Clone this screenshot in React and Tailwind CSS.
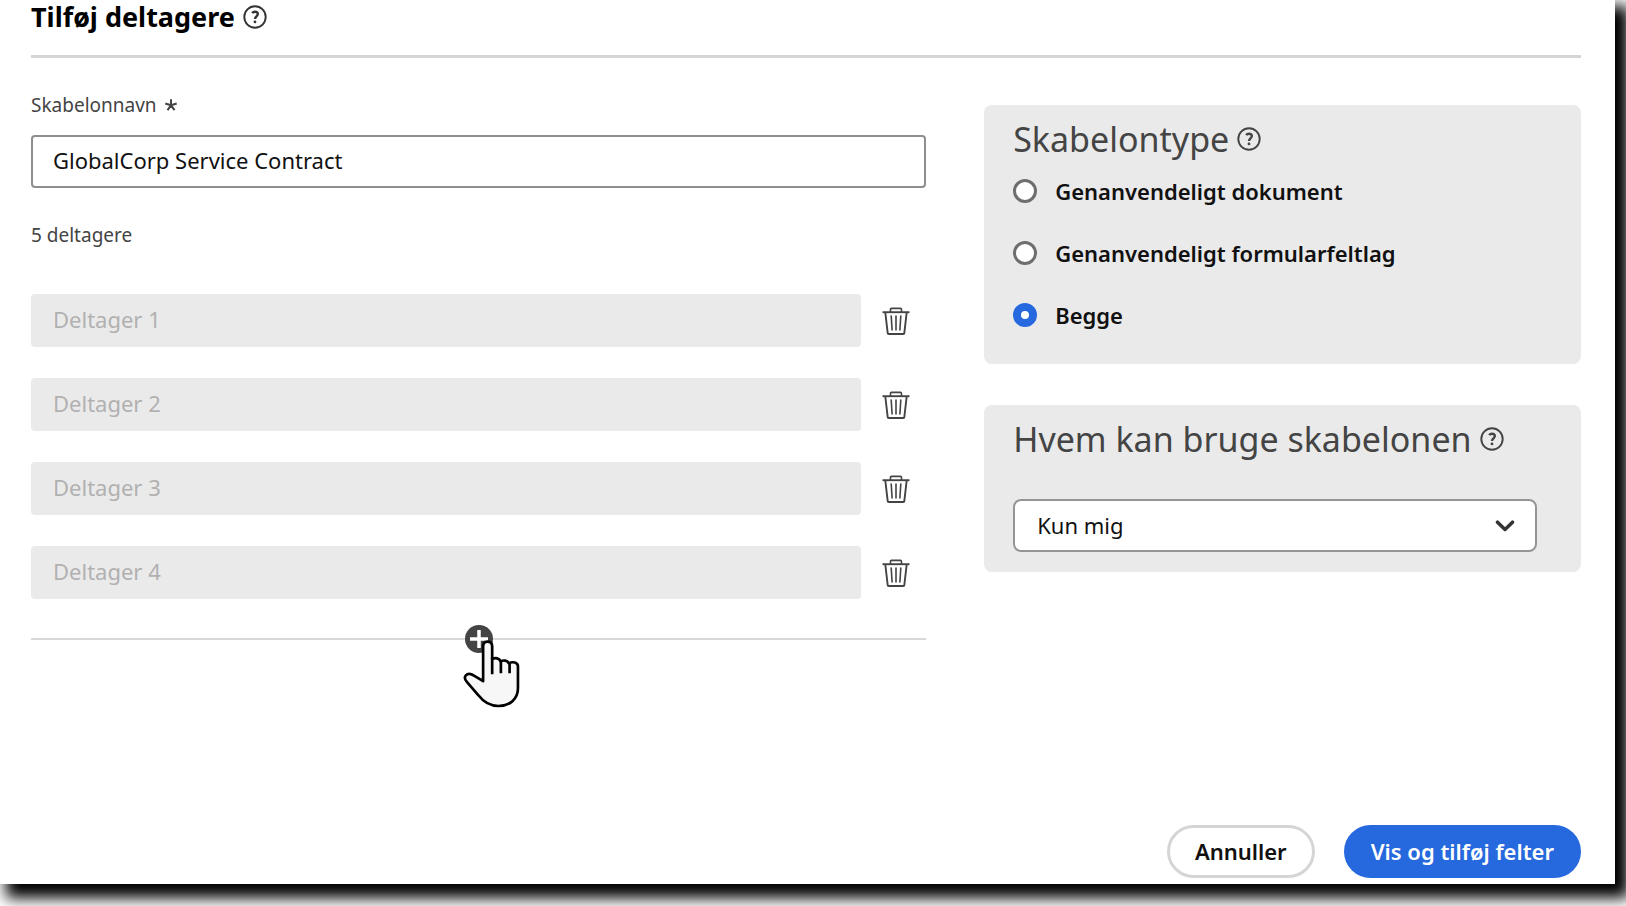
import React, { useState } from 'react';

const HelpIcon = () => (
  <svg className="size-6 shrink-0" viewBox="0 0 24 24" fill="none" stroke="currentColor" aria-hidden="true">
    <circle cx="12" cy="12" r="10.7" strokeWidth="1.9" />
    <path d="M9.2 8.2c.6-1 1.600-1.500 2.800-1.500 1.700 0 2.800.9 2.800 2.300 0 2.300-2.800 2.300-2.800 5" strokeWidth="2.400" />
    <circle cx="12" cy="16.900" r="1.400" fill="currentColor" stroke="none" />
  </svg>
);

const TrashIcon = () => (
  <svg className="size-7" viewBox="0 0 28 28" fill="none" stroke="currentColor" strokeWidth="1.6" aria-hidden="true">
    <path d="M.5 5.200h27" strokeWidth="1.900" />
    <path d="M8.500 5V2.500c0-.7.4-1.100 1.100-1.100h8.800c.7 0 1.100.4 1.100 1.100V5" />
    <path d="M3.300 5.500l2.400 20.600c0 .6.3.9.9.9h14.800c.6 0 .9-.3.9-.9L24.700 5.500" strokeWidth="1.900" />
    <path d="M9.200 9l.9 14M14 9v14M18.800 9l-.9 14" strokeLinecap="round" />
  </svg>
);

const AsteriskIcon = () => (
  <svg className="size-3" viewBox="0 0 12 12" fill="none" stroke="currentColor" strokeWidth="2" aria-hidden="true">
    <path d="M6 6.300V.2M6 6.300L.3 4.500M6 6.300l5.700-1.800M6 6.300l-3.500 4.900M6 6.300l3.500 4.900" />
  </svg>
);

const PointerIcon = () => (
  <svg
    className="pointer-events-none absolute top-3.5 left-1/2 -ml-4 h-[69px] w-[57px] overflow-visible"
    viewBox="70 298 170 206"
    fill="#f7f7f7"
    stroke="#000"
    strokeWidth="8"
    strokeLinejoin="round"
    aria-hidden="true"
  >
    <path d="M130 424V320c0-9 5-14 13-14s14 5 14 14v38c10-5 22-3 25 7 9-5 20-3 24 5 12-5 28-3 28 10v65c0 32-25 53-58 53-27 0-45-12-60-32L82 427c-7-8-8-15-4-20 6-7 17-5 26 1z" />
    <path d="M157 355v48M183 364v36M209 368v32" fill="none" />
  </svg>
);

const templateTypes = [
  { value: 'document', label: 'Genanvendeligt dokument' },
  { value: 'fields', label: 'Genanvendeligt formularfeltlag' },
  { value: 'both', label: 'Begge' }
];

const App = () => {
  const [name, setName] = useState('GlobalCorp Service Contract');
  const [participants, setParticipants] = useState([1, 2, 3, 4]);
  const [type, setType] = useState('both');

  const addParticipant = () => {
    setParticipants([...participants, participants.length + 1]);
  };

  const removeParticipant = (index) => {
    setParticipants(participants.filter((_, i) => i !== index));
  };

  return (
    <div className="flex min-h-screen overflow-hidden bg-white pr-[11px] pb-[22px] font-['Noto_Sans',sans-serif] text-[#111]">
      <main className="flex min-w-0 flex-1 flex-col bg-white pr-[34px] pb-1.5 pl-[31px] shadow-[10px_10px_14px_4px_#000]">
        <header className="flex items-center gap-2 border-b-3 border-[#d5d5d5] pb-[21px]">
          <h1 className="text-[27px] leading-[34px] font-bold text-black">Tilføj deltagere</h1>
          <button type="button" aria-label="Hjælp til deltagere" className="text-[#333]">
            <HelpIcon />
          </button>
        </header>

        <div className="grid flex-1 grid-cols-[3fr_2fr] items-start gap-[58px]">
          {/* Template name and participants */}
          <section className="min-w-0 pt-[35px]">
            <label htmlFor="templateName" className="flex items-center gap-2 text-[19px] leading-6 text-[#444]">
              Skabelonnavn
              <AsteriskIcon />
            </label>
            <input
              type="text"
              id="templateName"
              required
              value={name}
              onChange={(e) => setName(e.target.value)}
              className="mt-[18px] block h-[53px] w-full rounded border-2 border-[#8e8e8e] bg-white px-5 pb-1 text-[22px] outline-none"
            />

            <p className="mt-[35px] text-[19px] leading-6 text-[#444]">{participants.length + 1} deltagere</p>

            <div className="mt-[47px] flex flex-col gap-[31px]">
              {participants.map((id, index) => (
                <div key={id} className="flex items-center gap-[5px]">
                  <input
                    type="text"
                    disabled
                    aria-label={`Deltager ${index + 1}`}
                    value={`Deltager ${index + 1}`}
                    className="h-[53px] min-w-0 flex-1 rounded bg-[#eaeaea] px-[22px] pb-1 text-[22px] text-[#b1b1b1]"
                  />
                  <button
                    type="button"
                    aria-label={`Slet deltager ${index + 1}`}
                    onClick={() => removeParticipant(index)}
                    className="flex w-[60px] justify-center text-[#444]"
                  >
                    <TrashIcon />
                  </button>
                </div>
              ))}
            </div>

            <div className="relative mt-[26px] flex items-center">
              <span className="h-0.5 flex-1 bg-[#d8d8d8]" />
              <button
                type="button"
                aria-label="Tilføj deltager"
                onClick={addParticipant}
                className="size-7 rounded-full bg-[#444] text-white"
              >
                <svg className="size-7" viewBox="0 0 28 28" stroke="currentColor" strokeWidth="3.500" aria-hidden="true">
                  <path d="M14 5v18M5 14h18" />
                </svg>
              </button>
              <span className="h-0.5 flex-1 bg-[#d8d8d8]" />
              <PointerIcon />
            </div>
          </section>

          {/* Template options */}
          <aside className="flex min-w-0 flex-col gap-[41px] pt-[47px]">
            <fieldset className="rounded-lg bg-[#eaeaea] pt-2.5 pb-[35px] pl-[29px]">
              <div className="flex items-center gap-2 text-[#444]">
                <h2 className="text-[34px] leading-[48px]">Skabelontype</h2>
                <button type="button" aria-label="Hjælp til skabelontype">
                  <HelpIcon />
                </button>
              </div>
              <div className="mt-3.5 flex flex-col gap-[34px]">
                {templateTypes.map(({ value, label }) => (
                  <label key={value} className="flex items-center gap-[18px] text-[22px] leading-7 font-semibold">
                    <input
                      type="radio"
                      name="templateType"
                      value={value}
                      checked={type === value}
                      onChange={() => setType(value)}
                      className="size-6 shrink-0 appearance-none rounded-full border-3 border-[#6e6e6e] bg-white checked:border-8 checked:border-[#2668dd]"
                    />
                    {label}
                  </label>
                ))}
              </div>
            </fieldset>

            <div className="rounded-lg bg-[#eaeaea] pt-2.5 pr-11 pb-5 pl-[29px]">
              <div className="flex items-center gap-2 text-[#444]">
                <h2 className="text-[34px] leading-[48px]">Hvem kan bruge skabelonen</h2>
                <button type="button" aria-label="Hjælp til adgang">
                  <HelpIcon />
                </button>
              </div>
              <div className="relative mt-9">
                <select
                  aria-label="Hvem kan bruge skabelonen"
                  className="block h-[53px] w-full appearance-none rounded-lg border-2 border-[#959595] bg-white px-[22px] text-[22px] outline-none"
                >
                  <option>Kun mig</option>
                </select>
                <svg
                  className="pointer-events-none absolute inset-y-0 right-[22px] my-auto h-3 w-5"
                  viewBox="0 0 20 12"
                  fill="none"
                  stroke="#333"
                  strokeWidth="3.500"
                  strokeLinecap="round"
                  strokeLinejoin="round"
                  aria-hidden="true"
                >
                  <path d="M2.500 2.200l7.500 7.300 7.500-7.300" />
                </svg>
              </div>
            </div>
          </aside>
        </div>

        <footer className="flex justify-end gap-[29px]">
          <button type="button" className="h-[53px] rounded-full border-3 border-[#d5d5d5] bg-white px-[25px] text-[22px] font-semibold">
            Annuller
          </button>
          <button type="button" className="h-[53px] rounded-full bg-[#2668dd] px-[27px] text-[22px] font-semibold text-white">
            Vis og tilføj felter
          </button>
        </footer>
      </main>
    </div>
  );
};

export default App;
